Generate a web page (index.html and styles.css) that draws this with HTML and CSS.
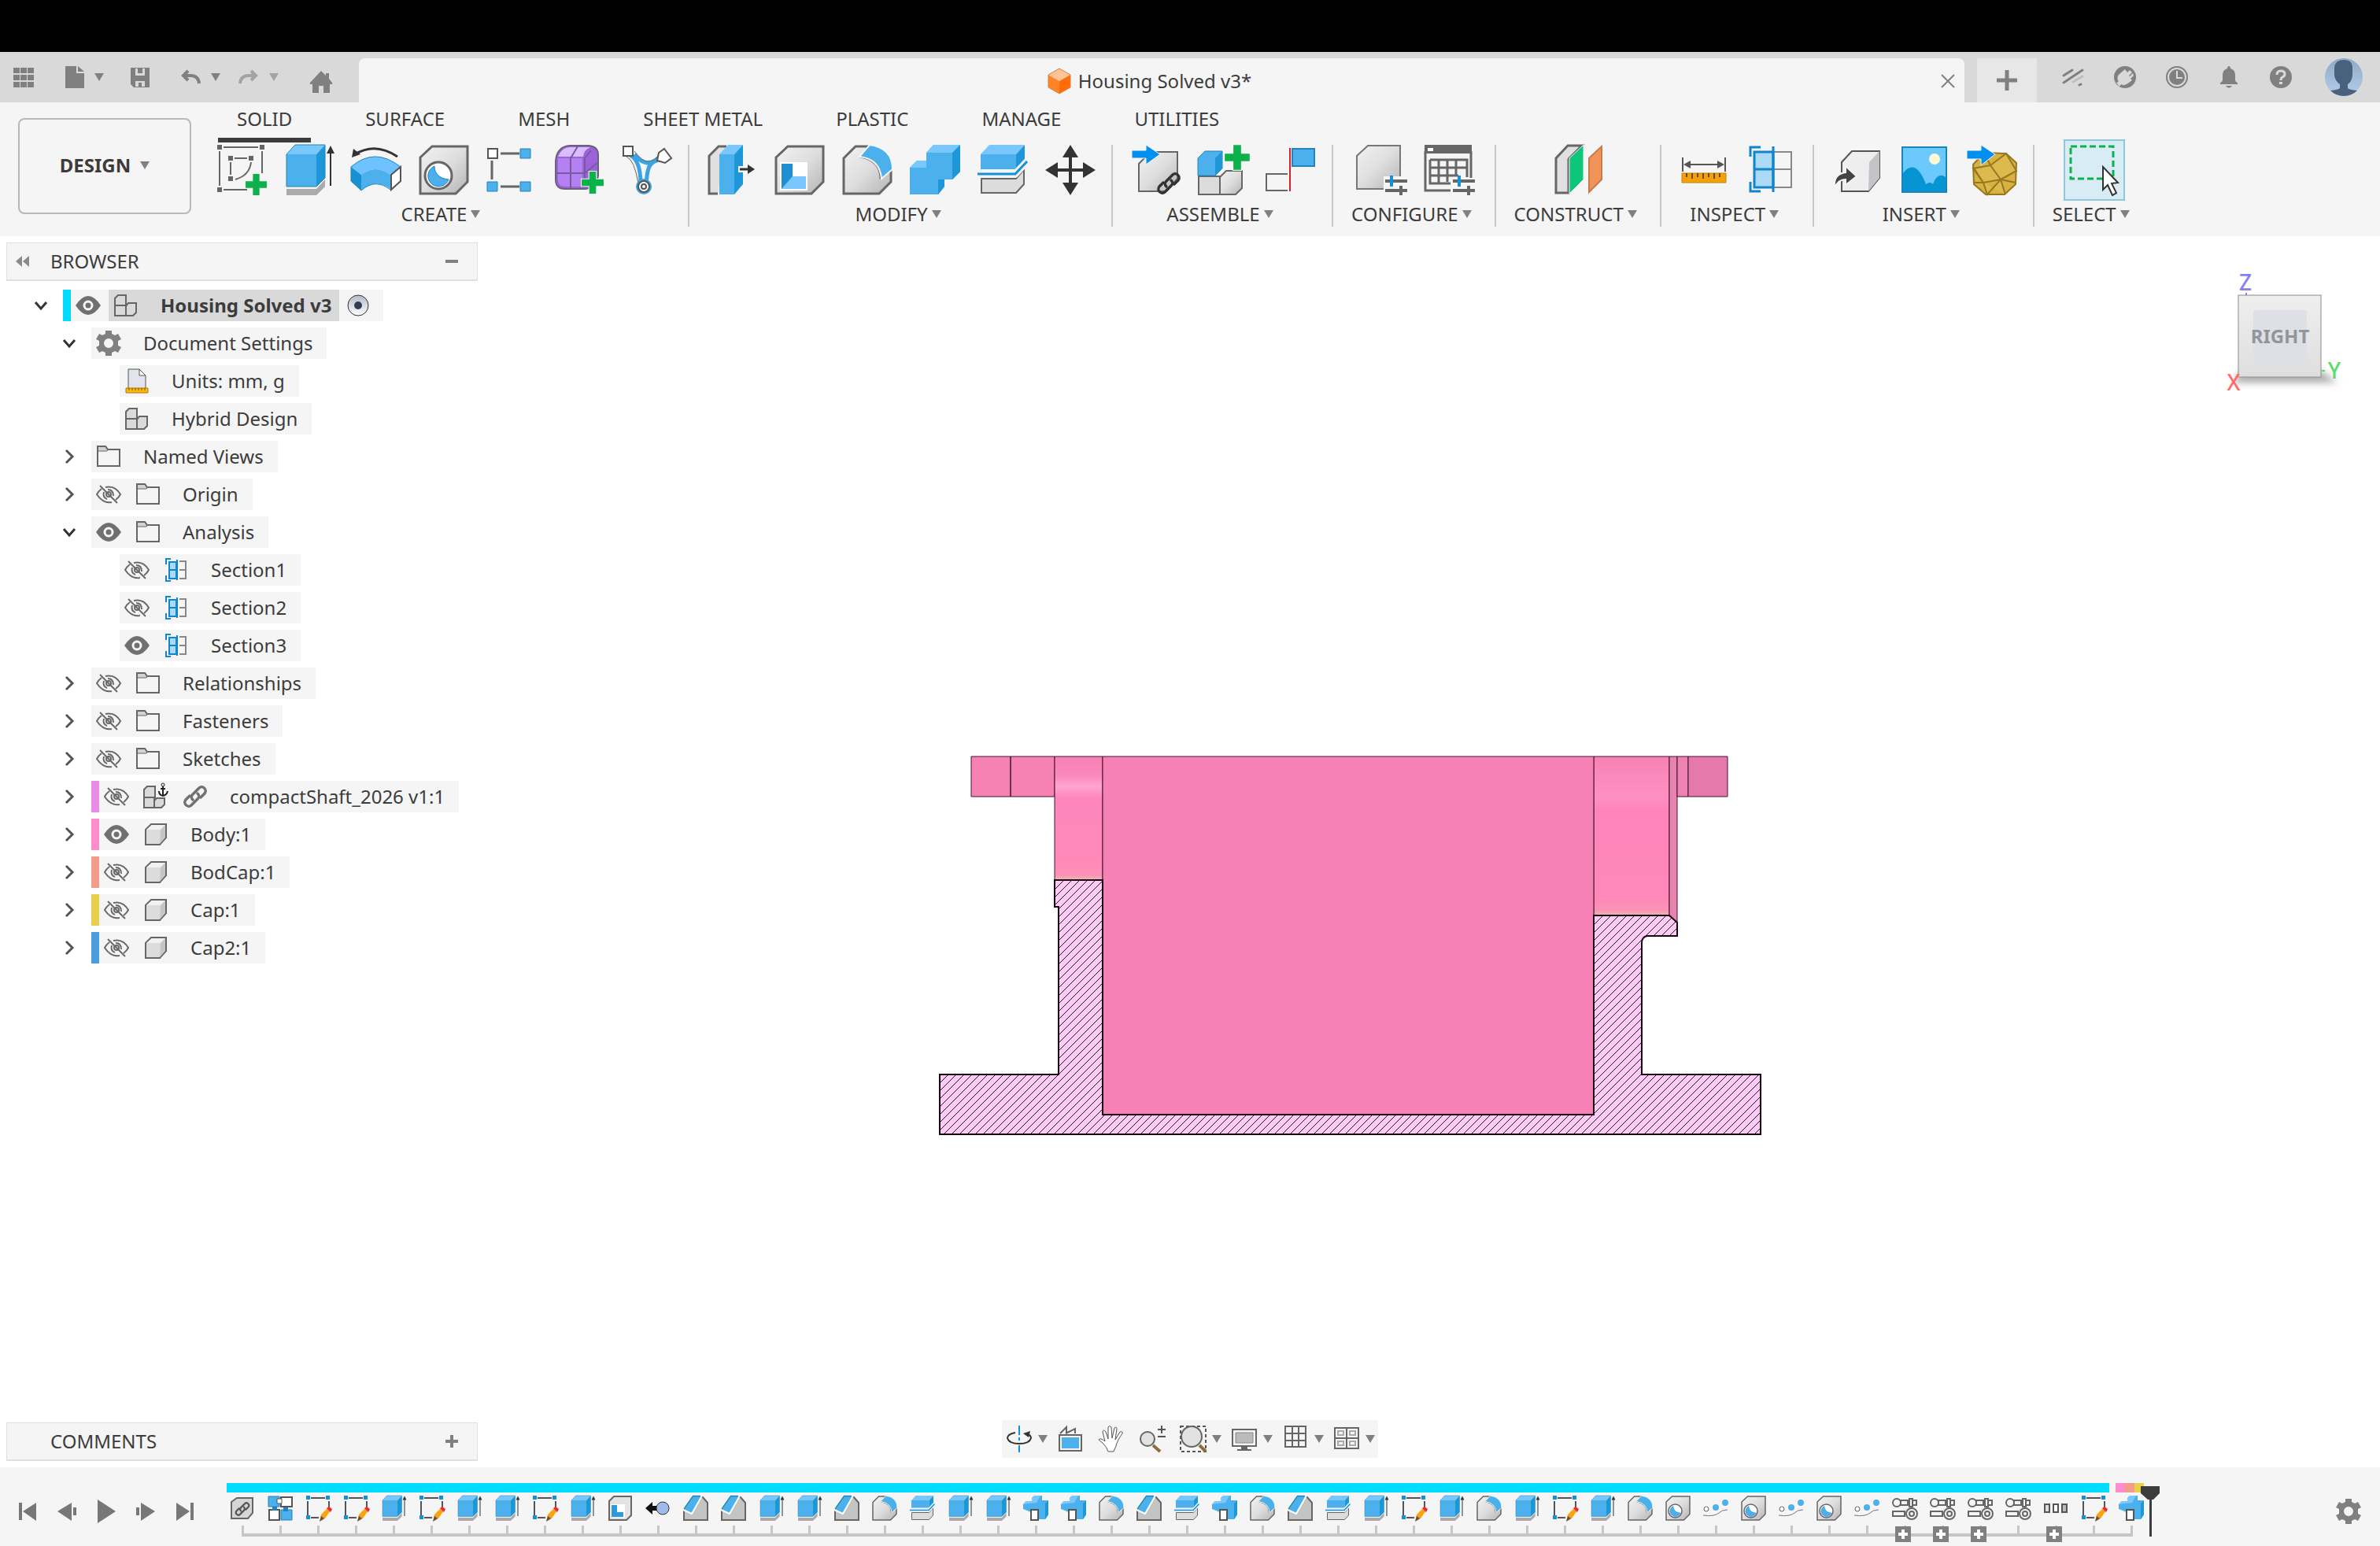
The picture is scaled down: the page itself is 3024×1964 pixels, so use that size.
FILE: index.html
```html
<!DOCTYPE html>
<html lang="en">
<head>
<meta charset="utf-8">
<title>Housing Solved v3*</title>
<link rel="stylesheet" href="styles.css">
</head>
<body>
<svg class="sprite" aria-hidden="true">
  <defs>
    <linearGradient id="g-grey" x1="0" y1="0" x2="1" y2="1"><stop offset="0" stop-color="#f2f2f2"/><stop offset=".5" stop-color="#dedede"/><stop offset="1" stop-color="#b4b4b4"/></linearGradient>
    <linearGradient id="g-radio" x1="0" y1="0" x2="0" y2="1"><stop offset="0" stop-color="#b4bac8"/><stop offset="1" stop-color="#fff"/></linearGradient>
    <linearGradient id="g-avatar" x1="0" y1="0" x2="0" y2="1"><stop offset="0" stop-color="#8fa9c6"/><stop offset="1" stop-color="#b4cdec"/></linearGradient>
  </defs>
  <symbol id="caret" viewBox="0 0 12 10"><path d="M0 0h12L6 10z" fill="currentColor"/></symbol>
  <symbol id="plus-green" viewBox="0 0 28 28"><path d="M9 0h10v9h9v10h-9v9H9v-9H0V9h9z" fill="#f5f5f5"/><path d="M10 1h8v9h9v8h-9v9h-8v-9H1v-8h9z" fill="#0cb14b"/></symbol>
  <symbol id="chain" viewBox="0 0 32 32"><g fill="none" stroke="currentColor" stroke-width="3.4" stroke-linecap="round"><path d="M13 20c-3-3-2-5 0-7l8-8c4-4 11 2 7 7l-5 5"/><path d="M19 12c3 3 2 5 0 7l-8 8c-4 4-11-2-7-7l5-5"/></g></symbol>

  <symbol id="i-sketch" viewBox="0 0 64 64"><g fill="none" stroke="#666" stroke-width="2"><path d="M10 3h44M5 8v44M59 8v28M10 57h30M24 17h16M19 22v16M45 22q-2 17-20 22"/></g><path d="M2 0h6v6H2zM56 0h6v6h-6zM2 54h6v6H2zM16 14h6v6h-6zM42 14h6v6h-6zM16 40h6v6h-6z" fill="#666"/><use href="#plus-green" x="37" y="36" width="29" height="29"/></symbol>
  <symbol id="i-extrude" viewBox="0 0 64 64"><path d="M4 56h38l11-12v9L42 64H4z" fill="#ababab"/><path d="M4 12 15 0h38L42 12z" fill="#7ac7fd"/><path d="M4 12h38v41H4z" fill="#4bb0eb"/><path d="M42 12 53 0v42L42 53z" fill="#1e97d8"/><path d="M4 53V12L15 0h38v42L42 53z" fill="none" stroke="#2184be" stroke-width="1"/><path d="M60 8v44" stroke="#333" stroke-width="2"/><path d="m60 1 5 10H55z" fill="#333"/></symbol>
  <symbol id="i-revolve" viewBox="0 0 64 64"><path d="M5 12Q31-4 59 15" fill="none" stroke="#333" stroke-width="3"/><path d="M1 16 3 5l9 7z" fill="#333"/><path d="M0 28Q30 2 63 28L50 38Q31 24 13 38z" fill="#6dc2ff"/><path d="m0 28 13 10v20L0 46z" fill="#1791d4"/><path d="M13 38Q31 24 50 38v18Q31 42 13 58z" fill="#4bb0eb"/><path d="M51 38 63 28v18L51 57z" fill="#fff" stroke="#555" stroke-width="2"/><path d="M0 46V28Q30 2 63 28M0 46l13 12Q31 42 50 57" fill="none" stroke="#2184be"/></symbol>
  <symbol id="i-hole" viewBox="0 0 64 64"><path d="M2 16 17 2h45v45L47 62H2z" fill="url(#g-grey)" stroke="#666" stroke-width="3"/><circle cx="25" cy="39" r="17" fill="#fff" stroke="#666" stroke-width="3"/><path d="M20 27a13.500 13.500 0 1 0 18 17C26 43 20 36 20 27z" fill="#4bb0eb" stroke="#2184be"/></symbol>
  <symbol id="i-pattern" viewBox="0 0 64 64"><path d="M18 11h24M18 53h24M7 20v24" stroke="#666" stroke-width="3"/><path d="M2 5h12v12H2z" fill="#fff" stroke="#555" stroke-width="2"/><path d="M43 5h13v12H43zM1 47h13v12H1zM43 47h13v12H43z" fill="#4bb0eb" stroke="#2184be"/></symbol>
  <symbol id="i-form" viewBox="0 0 64 64"><path d="M2 20Q4 2 20 1h24q12 1 12 12v26q-2 16-16 17H14Q2 56 2 44z" fill="#9c62dc" stroke="#6b6178" stroke-width="2"/><path d="M5 15Q10 3 20 3h26q-8 3-9 12z" fill="#d9bdff"/><path d="M5 17h31v36H14q-9 0-9-9z" fill="#b580f2"/><path d="M2 36h37l16-13M21 55V17L30 2M39 52V17l8-10" fill="none" stroke="#775c9c" stroke-width="2"/><use href="#plus-green" x="34" y="33" width="30" height="30"/></symbol>
  <symbol id="i-pipe" viewBox="0 0 64 64"><path d="M8 12q8 2 12 12 4 9 4 26M52 18q-15 2-18 12-2 6-3 20M16 12q8 10 16 11 10 0 20-12" fill="none" stroke="#3aa3e3" stroke-width="5"/><path d="M16 8q10 13 17 13 8 0 17-10M6 15q10 4 15 34" fill="none" stroke="#666" stroke-width="1"/><path d="M2 2h12v12H2z" fill="#fff" stroke="#555" stroke-width="2"/><path d="m54 5 9 12-8 6-10-3 2-10z" fill="#fff" stroke="#555" stroke-width="2"/><circle cx="28" cy="53" r="10" fill="#3aa3e3"/><circle cx="28" cy="53" r="7" fill="#fff" stroke="#555" stroke-width="2"/><circle cx="28" cy="53" r="3" fill="#fff" stroke="#555" stroke-width="2"/></symbol>

  <symbol id="i-presspull" viewBox="0 0 64 64"><path d="M14 62H3V14L15 2h10" fill="#e0e0e0" stroke="#666" stroke-width="3"/><path d="M16 12 27 0h19L35 12z" fill="#7ac7fd"/><path d="M16 12h19v51H16z" fill="#4bb0eb"/><path d="M35 12 46 0v50L35 63z" fill="#1e97d8"/><path d="M40 27h10v-8l14 12-14 12v-8H40z" fill="#f5f5f5"/><path d="M42 31h12" stroke="#333" stroke-width="3"/><path d="m52 25 9 6-9 6z" fill="#333"/></symbol>
  <symbol id="i-shell" viewBox="0 0 64 64"><path d="M2 16 17 2h45v45L47 62H2z" fill="url(#g-grey)" stroke="#666" stroke-width="3"/><path d="M7 22h35v36H7z" fill="#fff"/><path d="M9 24h14v32H9z" fill="#1e8fd0"/><path d="m9 56 14-16h17v16z" fill="#7ac7fd"/></symbol>
  <symbol id="i-fillet" viewBox="0 0 64 64"><path d="M2 17 17 2h17L24 15q24 5 25 26l13-10v16L47 62H2z" fill="url(#g-grey)" stroke="#666" stroke-width="3"/><path d="M22 15 35 0q29 4 29 31L50 43Q48 18 22 15z" fill="#4bb0eb" stroke="#f5f5f5" stroke-width="2"/></symbol>
  <symbol id="i-chamfer" viewBox="0 0 64 64"><path d="M2 62V36L24 2h24l14 16v44z" fill="#c4c4c4" stroke="#666" stroke-width="4"/><path d="M0 36 24 0h24L22 46z" fill="#4bb0eb" stroke="#fff" stroke-width="4"/><path d="M2 34 25 1h19" fill="none" stroke="#2184be" stroke-width="3"/></symbol>
  <symbol id="i-combine" viewBox="0 0 64 64"><path d="m0 29 9-9h12V10l9-10h34v34l-10 10H44v9L36 63H0z" fill="#4bb0eb"/><path d="m21 10 9-10h34L54 10zM0 29l9-9h12v9z" fill="#7ac7fd"/><path d="M54 10 64 0v34L54 44zM36 44h8v9l-8 10z" fill="#1e97d8"/></symbol>
  <symbol id="i-split" viewBox="0 0 64 64"><path d="M4 12 15 0h45L49 12z" fill="#7ac7fd"/><path d="M4 12h45v19H4z" fill="#4bb0eb"/><path d="M49 12 60 0v19L49 31z" fill="#1e97d8"/><path d="M5 43h44l10-12v19L49 61H5z" fill="#dcdcdc" stroke="#666" stroke-width="2"/><path d="M0 37h48l15-16" fill="none" stroke="#f5f5f5" stroke-width="9"/><path d="M0 37h48l15-16" fill="none" stroke="#1290dc" stroke-width="3"/></symbol>
  <symbol id="i-move" viewBox="0 0 64 64"><path d="m32 0 10 16h-8v14h14v-8l16 10-16 10v-8H34v14h8L32 64 22 48h8V34H16v8L0 32l16-10v8h14V16h-8z" fill="#333"/></symbol>

  <symbol id="i-insertlink" viewBox="0 0 64 64"><path d="M11 24 26 9h34v34L46 59H11z" fill="url(#g-grey)" stroke="#666" stroke-width="2"/><path d="M2 7h18V0l18 12-18 13v-8H2z" fill="#0090f0" stroke="#f5f5f5"/><use href="#chain" x="33" y="33" width="32" height="32" class="ink"/></symbol>
  <symbol id="i-newcomp" viewBox="0 0 64 64"><path d="M1 40h27v23H1z" fill="#dcdcdc" stroke="#666" stroke-width="2"/><path d="m28 41 8-8h20v22l-8 8H28z" fill="url(#g-grey)" stroke="#666" stroke-width="2"/><path d="m0 17 9-9h22v22l-9 9H0z" fill="#4bb0eb" stroke="#2184be"/><path d="m22 17 9-9v22l-9 9z" fill="#1e97d8"/><use href="#plus-green" x="33" y="-1" width="34" height="34"/></symbol>
  <symbol id="i-joint" viewBox="0 0 64 64"><path d="M28 37H1v21h27" fill="none" stroke="#666" stroke-width="2"/><path d="M34 5h28v22H34z" fill="#4bb0eb" stroke="#2184be" stroke-width="2"/><path d="M31 4v55" stroke="#d8202a" stroke-width="2"/></symbol>

  <symbol id="i-config" viewBox="0 0 64 64"><path d="M2 14 16 1h41v42L46 56H2z" fill="url(#g-grey)" stroke="#777" stroke-width="2"/><path d="M36 40h30v26H36z" fill="#f5f5f5"/><path d="M38 46h28M38 58h28" stroke="#666" stroke-width="4"/><path d="M46 39v14" stroke="#1290dc" stroke-width="4"/><path d="M58 52v12" stroke="#666" stroke-width="4"/></symbol>
  <symbol id="i-table" viewBox="0 0 64 64"><path d="M2 0h60v11H2z" fill="#666"/><path d="M6 4h7v4H6z" fill="#fff"/><path d="M3 8v50h32M61 8v34M9 19h47v22M9 19v30h26M9 29h46M9 39h36M20 19v30M31 19v28M42 19v20" fill="none" stroke="#666" stroke-width="3"/><path d="M38 46h28M38 58h28" stroke="#666" stroke-width="4"/><path d="M46 39v14" stroke="#1290dc" stroke-width="4"/><path d="M58 52v12" stroke="#666" stroke-width="4"/></symbol>
  <symbol id="i-plane" viewBox="0 0 64 64"><path d="M3 61V17L18 1h18L19 18v43z" fill="#e0e0e0" stroke="#666" stroke-width="3"/><path d="M20 17 38 0v44L20 62z" fill="#0cc67a" stroke="#f5f5f5"/><path d="M45 17 61 2v42L45 60z" fill="#f0945a" stroke="#c97b49" stroke-width="2"/></symbol>
  <symbol id="i-measure" viewBox="0 0 64 64"><path d="M5 16v18M59 16v18M9 25h46" stroke="#555" stroke-width="2"/><path d="m6 25 9-5v10zM58 25l-9-5v10z" fill="#555"/><path d="M4 36h56v12H4z" fill="#f2a10c" stroke="#c98200"/><path d="M10 36v5M17 36v7M24 36v5M31 36v7M38 36v5M45 36v7M52 36v5" stroke="#6b4a00" stroke-width="2"/></symbol>
  <symbol id="i-section" viewBox="0 0 64 64"><path d="M10 9h24v45H10z" fill="#acd9f5" stroke="#0f86cc" stroke-width="3"/><path d="M34 9h23v45H34M34 31h23" fill="none" stroke="#888" stroke-width="2"/><path d="M10 31h24M34 2v58M18 3H5v12M18 59H5V47" fill="none" stroke="#0f86cc" stroke-width="3"/></symbol>
  <symbol id="i-derive" viewBox="0 0 64 64"><path d="M13 22 26 8h35v34L47 59H13z" fill="#eee" stroke="#555" stroke-width="2"/><path d="m48 22 13-14v34L47 59z" fill="#c3c3c8"/><path d="M4 55q-2-18 14-20v-8l14 13-14 11v-7Q8 44 4 55z" fill="#444" stroke="#f5f5f5" stroke-width="2"/></symbol>
  <symbol id="i-image" viewBox="0 0 64 64"><path d="M4 3h56v57H4z" fill="#6bc9fd" stroke="#1a84b8" stroke-width="2"/><circle cx="45" cy="18" r="7" fill="#fdf9d2"/><path d="M5 36q16-20 29 14 6-4 9 0 6-16 16-9v18H5z" fill="#0694d3"/></symbol>
  <symbol id="i-mesh" viewBox="0 0 64 64"><path d="m22 10 28 1 13 12-1 27-14 13H24L9 50 8 25z" fill="#d7b240" stroke="#96781f" stroke-width="2"/><path d="m8 30 22-4 13 18-22 4zM30 26l20-15 13 22-20 11M21 48l5 15 17-19 6 19M9 48l12 0M43 44l19 4M30 26 22 10M21 48 8 28" fill="#e3c25c" fill-opacity=".5" stroke="#96781f" stroke-width="2"/><path d="M0 7h18V0l18 12-18 14v-8H0z" fill="#0090f0" stroke="#f5f5f5"/></symbol>
  <symbol id="i-select" viewBox="0 0 64 64"><path d="M2 2h54v41H2z" fill="none" stroke="#0cb14b" stroke-width="3" stroke-dasharray="8 4"/><path d="M43 28v29l6-6 6 13 5-3-6-12 8-1z" fill="#fff" stroke="#333" stroke-width="2"/></symbol>

  <symbol id="t-apps" viewBox="0 0 28 28"><path d="M1 2h8v7H1zm9 0h8v7h-8zm9 0h8v7h-8zM1 11h8v7H1zm9 0h8v7h-8zm9 0h8v7h-8zM1 20h8v7H1zm9 0h8v7h-8zm9 0h8v7h-8z" fill="currentColor"/></symbol>
  <symbol id="t-file" viewBox="0 0 28 28"><path d="M3 0h14v9h10v19H3zM19 0l8 7h-8z" fill="currentColor"/></symbol>
  <symbol id="t-save" viewBox="0 0 28 28"><path d="M2 2h24v25H6l-4-4zM8 3v9h12V3zM8 19v7h12v-7z" fill="currentColor" fill-rule="evenodd"/><path d="M11 2h6v7h-6zM12 21h4v5h-4z" fill="currentColor"/></symbol>
  <symbol id="t-undo" viewBox="0 0 28 28"><path d="M11 6 5 12l6 6M6 12h8q10 0 11 10" fill="none" stroke="currentColor" stroke-width="4"/></symbol>
  <symbol id="t-redo" viewBox="0 0 28 28"><path d="m17 6 6 6-6 6M22 12h-8Q4 12 3 22" fill="none" stroke="currentColor" stroke-width="4"/></symbol>
  <symbol id="t-home" viewBox="0 0 28 28"><path d="M14 0 20 6V3h4v7l4 5v2h-3v11h-8v-9h-6v9H3V17H0v-2z" fill="currentColor"/></symbol>
  <symbol id="t-ext" viewBox="0 0 28 28"><g stroke="currentColor" stroke-width="3" stroke-linecap="round"><path d="M2 12 13 5M2 21 26 5"/><path d="m14 20 12-7" opacity=".3"/><path d="m22 24 2-1"/></g></symbol>
  <symbol id="t-plug" viewBox="0 0 28 28"><circle cx="14" cy="14" r="14" fill="currentColor"/><path d="m14 4 3 4 3-3 3 3-4 4 1 1 4-4 1 3-4 4 2 2-4 3q-6 5-10 2l-2 3-4-5 3-1Q2 14 8 9z" fill="#d9d9d9"/></symbol>
  <symbol id="t-clock" viewBox="0 0 28 28"><circle cx="14" cy="14" r="13" fill="none" stroke="currentColor" stroke-width="2"/><circle cx="14" cy="14" r="10" fill="currentColor"/><path d="M14 6v9h7" fill="none" stroke="#d9d9d9" stroke-width="2"/></symbol>
  <symbol id="t-bell" viewBox="0 0 28 28"><path d="M14 0q2 0 2 3 6 2 6 8v6q0 3 3 4v2H3v-2q3-1 3-4v-6q0-6 6-8 0-3 2-3zM10 25h8q-4 5-8 0z" fill="currentColor"/></symbol>
  <symbol id="t-help" viewBox="0 0 28 28"><circle cx="14" cy="14" r="14" fill="currentColor"/><path d="M9 11q0-5 5-5t5 4q0 3-3 4-2 1-2 4" fill="none" stroke="#d9d9d9" stroke-width="3"/><path d="M12 20h4v3h-4z" fill="#d9d9d9"/></symbol>
  <symbol id="t-avatar" viewBox="0 0 48 48"><circle cx="24" cy="24" r="24" fill="url(#g-avatar)"/><path d="M12 12Q13 2 24 2t11 10v10q-1 8-6 11v5q2 2 12 3-7 7-17 7T7 41q10-1 12-3v-5q-6-4-7-11z" fill="#4a617e"/></symbol>
  <symbol id="t-cube" viewBox="0 0 28 32"><path d="M14 0 28 8 14 16 0 8z" fill="#ffc396"/><path d="m0 8 14 8v16L0 24z" fill="#ff8327"/><path d="m28 8-14 8v16l14-8z" fill="#ff6a0a"/><path d="m0 8 14-8 14 8v16l-14 8-14-8z" fill="none" stroke="#d9803f"/></symbol>

  <symbol id="b-down" viewBox="0 0 16 16"><path d="m1 4 7 8 7-8" fill="none" stroke="#333" stroke-width="3"/></symbol>
  <symbol id="b-right" viewBox="0 0 16 16"><path d="m4 0 8 8-8 8" fill="none" stroke="#555" stroke-width="3"/></symbol>
  <symbol id="b-eye" viewBox="0 0 32 32"><path d="M0 16Q16-8 32 16 16 40 0 16z" fill="#707070"/><circle cx="16" cy="16" r="5" fill="#707070" stroke="#f5f5f5" stroke-width="3"/></symbol>
  <symbol id="b-eyeoff" viewBox="0 0 32 32"><g fill="none" stroke="#6a6a6a" stroke-width="2"><path d="M7 9Q3 12 1 16q8 12 19 10M12 7q12-3 19 9-2 4-6 7"/><path d="M10 13q-2 7 4 9M15 10q7 0 7 8M5 5l22 22"/><circle cx="16" cy="16" r="3"/></g></symbol>
  <symbol id="b-comp" viewBox="0 0 32 32"><g fill="#dadada" stroke="#666" stroke-width="2"><path d="M2 16V7l4-4h10v13zM2 16h14v13H2z"/><path d="M16 29V17l3-4h10v12l-4 4z"/></g></symbol>
  <symbol id="b-anchorcomp" viewBox="0 0 32 32"><g fill="#dadada" stroke="#666" stroke-width="2"><path d="M1 17V7l4-4h10v14zM1 17h13v13H1z"/><path d="M14 30V21l3-3h10v8l-4 4z"/></g><path d="M25 3v12M22 6h6M20 9q0 5 5 6 5-1 6-6" fill="none" stroke="#222" stroke-width="2"/><circle cx="25" cy="1" r="2" fill="none" stroke="#222"/></symbol>
  <symbol id="b-body" viewBox="0 0 32 32"><path d="M3 10 10 3h19v17l-8 9H3z" fill="#dcdcdc" stroke="#666" stroke-width="2"/><path d="m4 10 7-6h17l-6 6z" fill="#f2f2f2"/><path d="m22 10 6-6v16l-7 8z" fill="#c6c6c6"/></symbol>
  <symbol id="b-folder" viewBox="0 0 32 32"><path d="M2 3h12v6H2z" fill="#d2d2d2"/><path d="M2 28V3h10l3 4h15v21z" fill="none" stroke="#666" stroke-width="2"/><path d="M2 9h12l2-2" fill="none" stroke="#666"/></symbol>
  <symbol id="b-section" viewBox="0 0 32 32"><path d="M7 6h9v21H7z" fill="#acd9f5" stroke="#0f86cc" stroke-width="2"/><path d="M20 5h8v22h-8M20 16h8" fill="none" stroke="#888" stroke-width="2"/><path d="M7 16h9M17 3v26M9 2H3v7M9 30H3v-7" fill="none" stroke="#0f86cc" stroke-width="2"/></symbol>
  <symbol id="b-gear" viewBox="0 0 32 32"><path d="M12 0h8v4l4 2 4-2 4 7-4 2v6l4 2-4 7-4-2-4 2v4h-8v-4l-4-2-4 2-4-7 4-2v-6L0 11l4-7 4 2 4-2zM16 10a6 6 0 1 0 0 12 6 6 0 0 0 0-12z" fill="#808080" fill-rule="evenodd"/></symbol>
  <symbol id="b-units" viewBox="0 0 32 32"><path d="M5 1h14l8 8v18H5z" fill="#e2e4ec" stroke="#555"/><path d="M19 1v8h8z" fill="#fff" stroke="#555"/><path d="M2 25h28v6H2z" fill="#fbb90e" stroke="#b07800"/><path d="M6 25v3M10 25v3M14 25v3M18 25v3M22 25v3M26 25v3" stroke="#7a5200"/></symbol>
  <symbol id="b-radio" viewBox="0 0 28 28"><circle cx="14" cy="14" r="13" fill="url(#g-radio)" stroke="#333" stroke-width="1"/><circle cx="14" cy="14" r="5" fill="#333d50"/></symbol>

  <symbol id="n-orbit" viewBox="0 0 34 34"><path d="M17 0v12M17 15v4M17 25v9" stroke="#1290dc" stroke-width="2"/><path d="M12 9Q2 11 2 16q2 7 15 7t15-7q0-4-6-6" fill="none" stroke="#333" stroke-width="2"/><path d="m22 10 9-3-2 8z" fill="#333"/></symbol>
  <symbol id="n-look" viewBox="0 0 34 34"><path d="M3 12h28v20H3z" fill="#f5f5f5" stroke="#666" stroke-width="2"/><path d="M6 15h22v14H6z" fill="#4bb0eb"/><path d="m4 10 8-8v8M11 10l12-6v6" fill="none" stroke="#666" stroke-width="2"/></symbol>
  <symbol id="n-pan" viewBox="0 0 34 34"><path d="M13 33q-1-5-7-11L1 18q2-3 8 2L6 8q1-4 4 0l3 9V2q2-3 4 0l1 14 3-13q3-2 3 1l-2 14 6-10q4-1 3 2-7 10-8 16l-3 7z" fill="#fff" stroke="#555"/></symbol>
  <symbol id="n-zoom" viewBox="0 0 34 34"><circle cx="11" cy="17" r="9" fill="#e2e2e2" stroke="#666" stroke-width="2"/><path d="m18 25 9 8" stroke="#8d6c3f" stroke-width="4"/><path d="M24 5h10M29 0v10M24 14h10" stroke="#555" stroke-width="2"/></symbol>
  <symbol id="n-fit" viewBox="0 0 34 34"><path d="M1 1h32v32H1z" fill="none" stroke="#555" stroke-width="2" stroke-dasharray="4 3"/><circle cx="15" cy="14" r="13" fill="#e2e2e2" stroke="#666" stroke-width="2"/><path d="m25 25 8 8" stroke="#8d6c3f" stroke-width="4"/></symbol>
  <symbol id="n-display" viewBox="0 0 34 34"><path d="M2 5h30v21H2z" fill="#f5f5f5" stroke="#666" stroke-width="2"/><path d="M6 9h22v13H6z" fill="#bbb" stroke="#888"/><path d="M13 26h8v4h5v2H8v-2h5z" fill="#666"/></symbol>
  <symbol id="n-grid" viewBox="0 0 34 34"><path d="M4 1h26v26H4zM13 1v26M21 1v26M4 10h26M4 19h26" fill="#f5f5f5" stroke="#666" stroke-width="2"/></symbol>
  <symbol id="n-views" viewBox="0 0 34 34"><path d="M2 3h30v26H2zM17 3v26M2 16h30" fill="#f5f5f5" stroke="#666" stroke-width="2"/><path d="M6 7h7v5H6zM21 7h7v5h-7zM6 20h7v5H6zM21 20h7v5h-7z" fill="none" stroke="#aaa" stroke-width="2"/></symbol>

  <symbol id="p-first" viewBox="0 0 26 30"><path d="M2 4h4v22H2zM24 4v23L7 15z" fill="#777"/></symbol>
  <symbol id="p-prev" viewBox="0 0 26 30"><path d="M19 4v23L1 15zM21 10h4v10h-4z" fill="#777"/></symbol>
  <symbol id="p-play" viewBox="0 0 26 30"><path d="M2 0v30l23-15z" fill="#777"/></symbol>
  <symbol id="p-next" viewBox="0 0 26 30"><path d="M7 4v23l18-12zM1 10h4v10H1z" fill="#777"/></symbol>
  <symbol id="p-last" viewBox="0 0 26 30"><path d="M24 4h-4v22h4zM2 4v23l17-12z" fill="#777"/></symbol>

  <symbol id="s-link" viewBox="0 0 32 32"><path d="m2 8 7-5h20v19l-6 7H2z" fill="#d6d6d6" stroke="#666" stroke-width="2"/><use href="#chain" x="6" y="7" width="20" height="20" color="#555"/></symbol>
  <symbol id="s-joint" viewBox="0 0 32 32"><path d="M1 1h14v13H1zM17 18h14v13H17z" fill="#4bb0eb" stroke="#2184be"/><path d="M17 2h14v12H17zM2 18h13v13H2z" fill="#fff" stroke="#555" stroke-width="2"/><path d="M12 4h6v6h-6z" fill="#fff" stroke="#555"/><path d="M6 14h6v5H6zM20 15h6v5h-6z" fill="#2184be"/></symbol>
  <symbol id="s-sketch" viewBox="0 0 32 32"><path d="M7 3h18M3 7v18M30 7v10M7 28h10" stroke="#555" stroke-width="2"/><path d="M1 0h5v5H1zM26 0h5v5h-5zM1 25h5v5H1z" fill="#1290dc"/><path d="m20 24 8-8 4 3-7 10-7 4z" fill="#fba40d"/><path d="m27 16 3-2 4 3-2 4z" fill="#f0243c"/><path d="m20 26 4 3-6 4z" fill="#555"/></symbol>
  <symbol id="s-shell" viewBox="0 0 32 32"><path d="m2 7 6-6h22v24l-6 6H2z" fill="#e3e3e3" stroke="#666" stroke-width="2"/><path d="M4 11h18v17H4z" fill="#fff"/><path d="M5 12h7v9h8v6H5z" fill="#2b9bdc"/></symbol>
  <symbol id="s-move" viewBox="0 0 32 32"><path d="m0 16 9-8v5h7v6H9v5z" fill="#111"/><circle cx="22" cy="16" r="8" fill="#9dbce8" stroke="#333"/></symbol>
  <symbol id="s-combine" viewBox="0 0 32 32"><path d="m0 11 4-4h7V3l3-3h10v6h8v18l-4 6H10v-9l-10-4z" fill="#4bb0eb"/><path d="m0 11 4-4h7V3l3-3h8l-5 9z" fill="#7ac7fd"/><path d="m28 10 4-4v18l-4 6z" fill="#1e97d8"/><path d="M10 18h9v13h-9z" fill="#fff" stroke="#555" stroke-width="2"/></symbol>
  <symbol id="s-path" viewBox="0 0 32 32"><circle cx="4" cy="17" r="3" fill="#fff" stroke="#666"/><circle cx="16" cy="15" r="4" fill="#4bb0eb"/><circle cx="28" cy="9" r="4" fill="#4bb0eb"/><path d="M0 25q14 2 20-3 4-4 11-4" fill="none" stroke="#777"/></symbol>
  <symbol id="s-fastener" viewBox="0 0 32 32"><g fill="#f5f5f5" stroke="#666" stroke-width="2"><circle cx="6" cy="9" r="5"/><path d="M11 6h9v6h-9zM22 4h4v10h-4zM26 6h5v6h-5zM1 20h15v6H1z"/><circle cx="25" cy="23" r="7"/><circle cx="25" cy="23" r="3"/></g></symbol>
  <symbol id="s-pattern" viewBox="0 0 32 32"><g stroke="#555" stroke-width="2"><path d="M2 11h6v10H2z" fill="#ddd"/><path d="M13 11h6v10h-6z" fill="#fff"/><path d="M24 11h6v10h-6z" fill="#bbb"/></g></symbol>
</svg>

<div class="app">
<div class="menubar-gap"></div>

<header class="titlebar">
  <div class="quick">
    <button aria-label="Data panel"><svg class="ic28"><use href="#t-apps"/></svg></button>
    <button aria-label="File"><svg class="ic28"><use href="#t-file"/></svg><svg class="caret"><use href="#caret"/></svg></button>
    <button aria-label="Save"><svg class="ic28"><use href="#t-save"/></svg></button>
    <button aria-label="Undo"><svg class="ic28"><use href="#t-undo"/></svg><svg class="caret"><use href="#caret"/></svg></button>
    <button class="faded" aria-label="Redo"><svg class="ic28"><use href="#t-redo"/></svg><svg class="caret"><use href="#caret"/></svg></button>
    <button class="home" aria-label="Home"><svg class="ic28"><use href="#t-home"/></svg></button>
  </div>
  <div class="doc-tab">
    <div class="doc-name"><svg class="cube"><use href="#t-cube"/></svg><span>Housing Solved v3*</span></div>
    <button aria-label="Close"><svg class="close" viewBox="0 0 18 18"><path d="m1 1 16 16M17 1 1 17" stroke="currentColor" stroke-width="2"/></svg></button>
  </div>
  <button class="new-tab" aria-label="New design"><svg class="ic28" viewBox="0 0 28 28"><path d="M14 1v26M1 14h26" stroke="currentColor" stroke-width="5"/></svg></button>
  <div class="account">
    <button aria-label="Extensions"><svg class="ic28"><use href="#t-ext"/></svg></button>
    <button aria-label="Add-ins"><svg class="ic28"><use href="#t-plug"/></svg></button>
    <button aria-label="Job status"><svg class="ic28"><use href="#t-clock"/></svg></button>
    <button aria-label="Notifications"><svg class="ic28"><use href="#t-bell"/></svg></button>
    <button aria-label="Help"><svg class="ic28"><use href="#t-help"/></svg></button>
    <button class="profile" aria-label="Profile"><svg class="avatar"><use href="#t-avatar"/></svg></button>
  </div>
</header>

<section class="toolbar">
  <button class="workspace">DESIGN<svg class="caret"><use href="#caret"/></svg></button>
  <div class="ribbon">
    <nav class="tabs">
      <button class="current">SOLID</button><button>SURFACE</button><button>MESH</button><button>SHEET METAL</button><button>PLASTIC</button><button>MANAGE</button><button>UTILITIES</button>
    </nav>
    <div class="groups">
      <div class="group"><div class="tools">
        <button aria-label="Create sketch"><svg class="ic64"><use href="#i-sketch"/></svg></button>
        <button aria-label="Extrude"><svg class="ic64"><use href="#i-extrude"/></svg></button>
        <button aria-label="Revolve"><svg class="ic64"><use href="#i-revolve"/></svg></button>
        <button aria-label="Hole"><svg class="ic64"><use href="#i-hole"/></svg></button>
        <button aria-label="Rectangular pattern"><svg class="ic64"><use href="#i-pattern"/></svg></button>
        <button aria-label="Create form"><svg class="ic64"><use href="#i-form"/></svg></button>
        <button aria-label="Automated modeling"><svg class="ic64"><use href="#i-pipe"/></svg></button>
      </div><button class="label">CREATE<svg class="caret"><use href="#caret"/></svg></button></div>
      <div class="group"><div class="tools">
        <button aria-label="Press pull"><svg class="ic64"><use href="#i-presspull"/></svg></button>
        <button aria-label="Shell"><svg class="ic64"><use href="#i-shell"/></svg></button>
        <button aria-label="Fillet"><svg class="ic64"><use href="#i-fillet"/></svg></button>
        <button aria-label="Combine"><svg class="ic64"><use href="#i-combine"/></svg></button>
        <button aria-label="Split body"><svg class="ic64"><use href="#i-split"/></svg></button>
        <button aria-label="Move"><svg class="ic64"><use href="#i-move"/></svg></button>
      </div><button class="label">MODIFY<svg class="caret"><use href="#caret"/></svg></button></div>
      <div class="group"><div class="tools">
        <button aria-label="Insert component"><svg class="ic64"><use href="#i-insertlink"/></svg></button>
        <button aria-label="New component"><svg class="ic64"><use href="#i-newcomp"/></svg></button>
        <button aria-label="Joint"><svg class="ic64"><use href="#i-joint"/></svg></button>
      </div><button class="label">ASSEMBLE<svg class="caret"><use href="#caret"/></svg></button></div>
      <div class="group"><div class="tools">
        <button aria-label="Configure"><svg class="ic64"><use href="#i-config"/></svg></button>
        <button aria-label="Configuration table"><svg class="ic64"><use href="#i-table"/></svg></button>
      </div><button class="label">CONFIGURE<svg class="caret"><use href="#caret"/></svg></button></div>
      <div class="group"><div class="tools">
        <button aria-label="Offset plane"><svg class="ic64"><use href="#i-plane"/></svg></button>
      </div><button class="label">CONSTRUCT<svg class="caret"><use href="#caret"/></svg></button></div>
      <div class="group"><div class="tools">
        <button aria-label="Measure"><svg class="ic64"><use href="#i-measure"/></svg></button>
        <button aria-label="Section analysis"><svg class="ic64"><use href="#i-section"/></svg></button>
      </div><button class="label">INSPECT<svg class="caret"><use href="#caret"/></svg></button></div>
      <div class="group"><div class="tools">
        <button aria-label="Derive"><svg class="ic64"><use href="#i-derive"/></svg></button>
        <button aria-label="Canvas"><svg class="ic64"><use href="#i-image"/></svg></button>
        <button aria-label="Insert mesh"><svg class="ic64"><use href="#i-mesh"/></svg></button>
      </div><button class="label">INSERT<svg class="caret"><use href="#caret"/></svg></button></div>
      <div class="group"><div class="tools">
        <button class="active" aria-label="Select"><svg class="ic64"><use href="#i-select"/></svg></button>
      </div><button class="label">SELECT<svg class="caret"><use href="#caret"/></svg></button></div>
    </div>
  </div>
</section>

<main class="canvas">
  <svg class="model" viewBox="1190 956 1052 490" role="img" aria-label="Section view of the housing">
    <defs>
      <pattern id="hatch" width="10" height="10" patternUnits="userSpaceOnUse"><rect width="10" height="10" fill="#fbcdf4"/><path d="M-1 11 11-1" stroke="#2c0f29" stroke-width="1"/></pattern>
      <linearGradient id="m-left" x1="0" y1="0" x2="0" y2="1"><stop offset="0" stop-color="#f682b5"/><stop offset=".15" stop-color="#fb88bb"/><stop offset=".24" stop-color="#ffa4d0"/><stop offset=".34" stop-color="#ff86bb"/><stop offset=".85" stop-color="#ff88b9"/><stop offset=".96" stop-color="#fb92b6"/><stop offset="1" stop-color="#e8b9b4"/></linearGradient>
      <linearGradient id="m-right" x1="0" y1="0" x2="0" y2="1"><stop offset="0" stop-color="#f682b3"/><stop offset=".25" stop-color="#ff90c3"/><stop offset=".34" stop-color="#ff84ba"/><stop offset=".9" stop-color="#ff88b9"/><stop offset=".97" stop-color="#f995b5"/><stop offset="1" stop-color="#e8b9b4"/></linearGradient>
    </defs>
    <g stroke="#45142c" stroke-width="1">
      <path d="M1234 961h50v51h-50zM1284 961h56v51h-56z" fill="#f682b4"/>
      <path d="M1340 961h61v157h-61z" fill="url(#m-left)"/>
      <path d="M2025 961h96v202h-96z" fill="url(#m-right)"/>
      <path d="M2121 961h10v211l-10-9z" fill="#e882ae"/>
      <path d="M2131 961h14v51h-14z" fill="#ee82b2"/>
      <path d="M2145 961h50v51h-50z" fill="#e679ab"/>
      <path d="M1401 961h624v455h-624z" fill="#f682b5"/>
    </g>
    <path d="M1340 1118h61v298h624v-253h96l10 9v17h-38q-7 1-7 9v167h151v76H1194v-76h151v-213h-5z" fill="url(#hatch)" stroke="#1a0013" stroke-width="2"/>
  </svg>

  <svg class="viewcube" viewBox="0 0 160 170" role="img" aria-label="View cube: right">
    <defs>
      <filter id="soft" x="-20%" y="-100%" width="140%" height="300%"><feGaussianBlur stdDeviation="5"/></filter>
      <linearGradient id="face" x1="0" y1="0" x2="0" y2="1"><stop offset="0" stop-color="#efefef"/><stop offset="1" stop-color="#dedede"/></linearGradient>
    </defs>
    <path d="M18 146h132l-20-14H26z" fill="#aaa" filter="url(#soft)"/>
    <rect x="24" y="35" width="105" height="104" fill="url(#face)" stroke="#8c8c8c"/>
    <rect x="43" y="54" width="68" height="68" rx="3" fill="#dde0e4"/>
    <text x="77" y="96" class="cube-face">RIGHT</text>
    <path d="M34 32v3" stroke="#8a7ff0" stroke-width="2"/><path d="M130 131h4" stroke="#59dd68" stroke-width="2"/>
    <text x="33" y="29" class="axis axis-z">Z</text>
    <text x="18" y="156" class="axis axis-x">X</text>
    <text x="146" y="141" class="axis axis-y">Y</text>
  </svg>

  <aside class="side">
    <div class="browser">
      <div class="panel-head">
        <button aria-label="Collapse"><svg class="rewind" viewBox="0 0 18 14"><path d="M8 0v14L0 7zM17 0v14L9 7z" fill="#8a8a8a"/></svg></button>
        <h2>BROWSER</h2>
        <button aria-label="Minimize"><svg class="sign" viewBox="0 0 18 18"><path d="M1 9h16" stroke="#808080" stroke-width="4"/></svg></button>
      </div>
      <ul class="tree">
        <li class="lv0"><button aria-label="Collapse"><svg class="chev"><use href="#b-down"/></svg></button><div class="node tag cyan"><svg class="ic32"><use href="#b-eye"/></svg><div class="picked"><svg class="ic32"><use href="#b-comp"/></svg><span>Housing Solved v3</span></div><svg class="ic28"><use href="#b-radio"/></svg></div></li>
        <li class="lv1"><button aria-label="Collapse"><svg class="chev"><use href="#b-down"/></svg></button><div class="node"><svg class="ic32"><use href="#b-gear"/></svg><span>Document Settings</span></div></li>
        <li class="lv2"><div class="node"><svg class="ic32"><use href="#b-units"/></svg><span>Units: mm, g</span></div></li>
        <li class="lv2"><div class="node"><svg class="ic32"><use href="#b-comp"/></svg><span>Hybrid Design</span></div></li>
        <li class="lv1"><button aria-label="Expand"><svg class="chev"><use href="#b-right"/></svg></button><div class="node"><svg class="ic32"><use href="#b-folder"/></svg><span>Named Views</span></div></li>
        <li class="lv1"><button aria-label="Expand"><svg class="chev"><use href="#b-right"/></svg></button><div class="node"><svg class="ic32"><use href="#b-eyeoff"/></svg><svg class="ic32"><use href="#b-folder"/></svg><span>Origin</span></div></li>
        <li class="lv1"><button aria-label="Collapse"><svg class="chev"><use href="#b-down"/></svg></button><div class="node"><svg class="ic32"><use href="#b-eye"/></svg><svg class="ic32"><use href="#b-folder"/></svg><span>Analysis</span></div></li>
        <li class="lv2"><div class="node"><svg class="ic32"><use href="#b-eyeoff"/></svg><svg class="ic32"><use href="#b-section"/></svg><span>Section1</span></div></li>
        <li class="lv2"><div class="node"><svg class="ic32"><use href="#b-eyeoff"/></svg><svg class="ic32"><use href="#b-section"/></svg><span>Section2</span></div></li>
        <li class="lv2"><div class="node"><svg class="ic32"><use href="#b-eye"/></svg><svg class="ic32"><use href="#b-section"/></svg><span>Section3</span></div></li>
        <li class="lv1"><button aria-label="Expand"><svg class="chev"><use href="#b-right"/></svg></button><div class="node"><svg class="ic32"><use href="#b-eyeoff"/></svg><svg class="ic32"><use href="#b-folder"/></svg><span>Relationships</span></div></li>
        <li class="lv1"><button aria-label="Expand"><svg class="chev"><use href="#b-right"/></svg></button><div class="node"><svg class="ic32"><use href="#b-eyeoff"/></svg><svg class="ic32"><use href="#b-folder"/></svg><span>Fasteners</span></div></li>
        <li class="lv1"><button aria-label="Expand"><svg class="chev"><use href="#b-right"/></svg></button><div class="node"><svg class="ic32"><use href="#b-eyeoff"/></svg><svg class="ic32"><use href="#b-folder"/></svg><span>Sketches</span></div></li>
        <li class="lv1"><button aria-label="Expand"><svg class="chev"><use href="#b-right"/></svg></button><div class="node tag violet"><svg class="ic32"><use href="#b-eyeoff"/></svg><svg class="ic32"><use href="#b-anchorcomp"/></svg><svg class="ic32 link"><use href="#chain"/></svg><span>compactShaft_2026 v1:1</span></div></li>
        <li class="lv1"><button aria-label="Expand"><svg class="chev"><use href="#b-right"/></svg></button><div class="node tag pink"><svg class="ic32"><use href="#b-eye"/></svg><svg class="ic32"><use href="#b-body"/></svg><span>Body:1</span></div></li>
        <li class="lv1"><button aria-label="Expand"><svg class="chev"><use href="#b-right"/></svg></button><div class="node tag salmon"><svg class="ic32"><use href="#b-eyeoff"/></svg><svg class="ic32"><use href="#b-body"/></svg><span>BodCap:1</span></div></li>
        <li class="lv1"><button aria-label="Expand"><svg class="chev"><use href="#b-right"/></svg></button><div class="node tag yellow"><svg class="ic32"><use href="#b-eyeoff"/></svg><svg class="ic32"><use href="#b-body"/></svg><span>Cap:1</span></div></li>
        <li class="lv1"><button aria-label="Expand"><svg class="chev"><use href="#b-right"/></svg></button><div class="node tag blue"><svg class="ic32"><use href="#b-eyeoff"/></svg><svg class="ic32"><use href="#b-body"/></svg><span>Cap2:1</span></div></li>
      </ul>
    </div>
    <div class="panel-head">
      <span></span>
      <h2>COMMENTS</h2>
      <button aria-label="Add comment"><svg class="sign" viewBox="0 0 18 18"><path d="M1 9h16M9 1v16" stroke="#808080" stroke-width="4"/></svg></button>
    </div>
  </aside>

  <nav class="navbar" aria-label="View controls">
    <button class="menu" aria-label="Orbit"><svg class="ic34"><use href="#n-orbit"/></svg><svg class="caret"><use href="#caret"/></svg></button>
    <button aria-label="Look at"><svg class="ic34"><use href="#n-look"/></svg></button>
    <button aria-label="Pan"><svg class="ic34"><use href="#n-pan"/></svg></button>
    <button aria-label="Zoom"><svg class="ic34"><use href="#n-zoom"/></svg></button>
    <button class="menu" aria-label="Fit"><svg class="ic34"><use href="#n-fit"/></svg><svg class="caret"><use href="#caret"/></svg></button>
    <button class="menu" aria-label="Display settings"><svg class="ic34"><use href="#n-display"/></svg><svg class="caret"><use href="#caret"/></svg></button>
    <button class="menu" aria-label="Grid and snaps"><svg class="ic34"><use href="#n-grid"/></svg><svg class="caret"><use href="#caret"/></svg></button>
    <button class="menu" aria-label="Viewports"><svg class="ic34"><use href="#n-views"/></svg><svg class="caret"><use href="#caret"/></svg></button>
  </nav>
</main>

<footer class="timeline">
  <div class="player">
    <button aria-label="First"><svg><use href="#p-first"/></svg></button>
    <button aria-label="Previous"><svg><use href="#p-prev"/></svg></button>
    <button aria-label="Play"><svg><use href="#p-play"/></svg></button>
    <button aria-label="Next"><svg><use href="#p-next"/></svg></button>
    <button aria-label="Last"><svg><use href="#p-last"/></svg></button>
  </div>
  <div class="history">
    <div class="bars"><span class="bar cyan"></span><span class="swatches"><i class="pink"></i><i class="salmon"></i><i class="yellow"></i></span></div>
    <ol class="steps">
      <li><svg class="ic32"><use href="#s-link"/></svg></li>
      <li><svg class="ic32"><use href="#s-joint"/></svg></li>
      <li><svg class="ic32"><use href="#s-sketch"/></svg></li>
      <li><svg class="ic32"><use href="#s-sketch"/></svg></li>
      <li><svg class="ic32"><use href="#i-extrude"/></svg></li>
      <li><svg class="ic32"><use href="#s-sketch"/></svg></li>
      <li><svg class="ic32"><use href="#i-extrude"/></svg></li>
      <li><svg class="ic32"><use href="#i-extrude"/></svg></li>
      <li><svg class="ic32"><use href="#s-sketch"/></svg></li>
      <li><svg class="ic32"><use href="#i-extrude"/></svg></li>
      <li><svg class="ic32"><use href="#s-shell"/></svg></li>
      <li><svg class="ic32"><use href="#s-move"/></svg></li>
      <li><svg class="ic32"><use href="#i-chamfer"/></svg></li>
      <li><svg class="ic32"><use href="#i-chamfer"/></svg></li>
      <li><svg class="ic32"><use href="#i-extrude"/></svg></li>
      <li><svg class="ic32"><use href="#i-extrude"/></svg></li>
      <li><svg class="ic32"><use href="#i-chamfer"/></svg></li>
      <li><svg class="ic32"><use href="#i-fillet"/></svg></li>
      <li><svg class="ic32"><use href="#i-split"/></svg></li>
      <li><svg class="ic32"><use href="#i-extrude"/></svg></li>
      <li><svg class="ic32"><use href="#i-extrude"/></svg></li>
      <li><svg class="ic32"><use href="#s-combine"/></svg></li>
      <li><svg class="ic32"><use href="#s-combine"/></svg></li>
      <li><svg class="ic32"><use href="#i-fillet"/></svg></li>
      <li><svg class="ic32"><use href="#i-chamfer"/></svg></li>
      <li><svg class="ic32"><use href="#i-split"/></svg></li>
      <li><svg class="ic32"><use href="#s-combine"/></svg></li>
      <li><svg class="ic32"><use href="#i-fillet"/></svg></li>
      <li><svg class="ic32"><use href="#i-chamfer"/></svg></li>
      <li><svg class="ic32"><use href="#i-split"/></svg></li>
      <li><svg class="ic32"><use href="#i-extrude"/></svg></li>
      <li><svg class="ic32"><use href="#s-sketch"/></svg></li>
      <li><svg class="ic32"><use href="#i-extrude"/></svg></li>
      <li><svg class="ic32"><use href="#i-fillet"/></svg></li>
      <li><svg class="ic32"><use href="#i-extrude"/></svg></li>
      <li><svg class="ic32"><use href="#s-sketch"/></svg></li>
      <li><svg class="ic32"><use href="#i-extrude"/></svg></li>
      <li><svg class="ic32"><use href="#i-fillet"/></svg></li>
      <li><svg class="ic32"><use href="#i-hole"/></svg></li>
      <li><svg class="ic32"><use href="#s-path"/></svg></li>
      <li><svg class="ic32"><use href="#i-hole"/></svg></li>
      <li><svg class="ic32"><use href="#s-path"/></svg></li>
      <li><svg class="ic32"><use href="#i-hole"/></svg></li>
      <li><svg class="ic32"><use href="#s-path"/></svg></li>
      <li><svg class="ic32"><use href="#s-fastener"/></svg><button class="expand" aria-label="Expand group"></button></li>
      <li><svg class="ic32"><use href="#s-fastener"/></svg><button class="expand" aria-label="Expand group"></button></li>
      <li><svg class="ic32"><use href="#s-fastener"/></svg><button class="expand" aria-label="Expand group"></button></li>
      <li><svg class="ic32"><use href="#s-fastener"/></svg></li>
      <li><svg class="ic32"><use href="#s-pattern"/></svg><button class="expand" aria-label="Expand group"></button></li>
      <li><svg class="ic32"><use href="#s-sketch"/></svg></li>
      <li><svg class="ic32"><use href="#s-combine"/></svg></li>
    </ol>
    <svg class="marker" viewBox="0 0 24 64"><path d="M0 0h24v9l-8 8h-2v47h-3V17H9L0 9z" fill="#3c3c3c"/></svg>
  </div>
  <button class="settings" aria-label="Timeline settings"><svg class="ic32"><use href="#b-gear"/></svg></button>
</footer>
</div>
</body>
</html>
```

FILE: styles.css
```css
* {
  box-sizing: border-box;
}

body {
  margin: 0;
  background: #fff;
  color: #3c3c3c;
  font-family: "Noto Sans", "Open Sans", sans-serif;
  font-size: 24px;
  line-height: 32px;
}

button {
  display: flex;
  align-items: center;
  margin: 0;
  padding: 0;
  border: 0;
  background: none;
  color: inherit;
  font: inherit;
}

svg {
  display: block;
  flex: none;
  overflow: visible;
}

symbol {
  overflow: visible;
}

h2 {
  margin: 0;
  font-size: 24px;
  font-weight: 400;
}

ul,
ol {
  margin: 0;
  padding: 0;
  list-style: none;
}

.sprite {
  position: absolute;
  width: 0;
  height: 0;
}

.caret { width: 12px; height: 10px; color: #808080; }
.ic28 { width: 28px; height: 28px; }
.ic32 { width: 32px; height: 32px; }
.ic34 { width: 34px; height: 34px; }
.ic64 { width: 64px; height: 64px; }
.ink { color: #333; }

.cyan { --tag: #00dcff; }
.violet { --tag: #e98ce6; }
.pink { --tag: #ff8ccb; }
.salmon { --tag: #f49c8c; }
.yellow { --tag: #e8cf4c; }
.blue { --tag: #4a9de0; }

.app {
  display: flex;
  flex-direction: column;
  min-height: 100vh;
}

.menubar-gap {
  height: 66px;
  background: #000;
}

/* Title bar */
.titlebar {
  display: flex;
  height: 64px;
  background: #d9d9d9;
  color: #808080;
}

.quick {
  display: grid;
  grid-template-columns: 64px 84px 64px 74px 92px 46px;
  align-items: center;
  padding: 0 16px;
}

.quick button {
  gap: 12px;
}

.quick .home {
  padding-top: 12px;
}

.quick .faded {
  opacity: 0.6;
}

.doc-tab {
  display: flex;
  flex: 1;
  align-items: center;
  margin-top: 8px;
  padding: 2px 12px 0 0;
  border-radius: 8px 8px 0 0;
  background: #f5f5f5;
}

.doc-name {
  display: flex;
  flex: 1;
  align-items: center;
  justify-content: center;
  gap: 10px;
  color: #3c3c3c;
}

.cube { width: 28px; height: 32px; }
.close { width: 18px; height: 18px; }

.new-tab {
  justify-content: center;
  width: 76px;
  margin: 8px 0 0 16px;
  background: #e7e7e7;
}

.account {
  display: flex;
  align-items: center;
  gap: 38px;
  padding: 0 22px 0 32px;
}

.profile { padding-left: 4px; }
.avatar { width: 48px; height: 48px; }

/* Toolbar */
.toolbar {
  display: flex;
  height: 170px;
  padding-left: 23px;
  background: #f5f5f5;
}

.workspace {
  justify-content: center;
  gap: 12px;
  width: 220px;
  height: 122px;
  margin: 20px 9px 0 0;
  padding-bottom: 2px;
  border: 2px solid #b8b8b8;
  border-radius: 8px;
  font-weight: 700;
}

.tabs {
  display: flex;
  gap: 45px;
  padding: 5px 0 0 25px;
}

.tabs button {
  height: 46px;
  padding: 0 24px 8px;
  border-bottom: 6px solid transparent;
}

.tabs .current {
  border-color: #3c3c3c;
}

.groups {
  display: flex;
  padding-top: 3px;
}

.group {
  display: flex;
  flex-direction: column;
  align-items: center;
  gap: 8px;
  padding: 0 20px 0 22px;
  border-right: 2px solid #c8c8c8;
}

.group:last-child {
  border-right: 0;
}

.tools {
  display: flex;
  gap: 22px;
}

.tools .active {
  margin: -7px;
  padding: 5px;
  border: 2px solid #8fc8dc;
  background: #d8ecf5;
}

.label {
  gap: 5px;
  padding: 0 9px 0 1px;
}

/* Canvas */
.canvas {
  position: relative;
  display: flex;
  flex: 1;
  padding: 8px;
}

.model {
  position: absolute;
  left: 1190px;
  top: 656px;
  width: 1052px;
  height: 490px;
}

.viewcube {
  position: absolute;
  right: 44px;
  top: 40px;
  width: 160px;
  height: 170px;
  font-size: 28px;
  text-anchor: middle;
}

.cube-face {
  fill: #92969b;
  font-size: 24px;
  font-weight: 700;
}

.axis { font-weight: 500; }
.axis-x { fill: #ff6b6b; }
.axis-y { fill: #59dd68; }
.axis-z { fill: #8a7ff0; }

.side {
  display: flex;
  flex-direction: column;
  justify-content: space-between;
  width: 599px;
}

.panel-head {
  display: grid;
  grid-template-columns: 44px 1fr auto;
  align-items: center;
  height: 49px;
  padding: 0 23px 0 11px;
  border: 1px solid #e0e0e0;
  border-bottom-width: 2px;
  background: #f5f5f5;
}

.rewind { width: 18px; height: 14px; }
.sign { width: 18px; height: 18px; }

.tree {
  display: grid;
  gap: 8px;
  padding-top: 11px;
}

.tree li {
  display: flex;
  align-items: center;
}

.lv0 { padding-left: 36px; }
.lv1 { padding-left: 72px; }
.lv2 { padding-left: 144px; }

.lv0 > button,
.lv1 > button {
  padding-right: 20px;
}

.chev { width: 16px; height: 16px; }

.node {
  display: flex;
  align-items: center;
  gap: 18px;
  height: 40px;
  padding: 0 18px 0 6px;
  background: #f5f5f5;
}

.node span {
  padding-left: 10px;
}

.tag {
  border-left: 10px solid var(--tag);
}

.lv0 .node {
  gap: 10px;
}

.picked {
  display: flex;
  align-items: center;
  gap: 18px;
  height: 40px;
  padding: 0 10px 0 6px;
  background: #d9d9d9;
  font-weight: 700;
}

.link { color: #707070; }

.navbar {
  position: absolute;
  bottom: 12px;
  left: 50%;
  display: flex;
  align-items: center;
  gap: 18px;
  height: 48px;
  padding: 0 10px 0 5px;
  transform: translateX(-50%);
  background: #f5f5f5;
}

.navbar .menu {
  gap: 7px;
  margin-right: -6px;
}

/* Timeline */
.timeline {
  display: flex;
  height: 100px;
  padding: 0 24px 0 22px;
  background: #f5f5f5;
}

.player {
  display: flex;
  gap: 24px;
  width: 262px;
  padding-top: 12px;
}

.player svg {
  width: 26px;
  height: 30px;
}

.history {
  position: relative;
  padding-top: 20px;
}

.bars,
.steps {
  display: grid;
  grid-template-columns: repeat(51, 48px);
}

.bar {
  grid-column: 1 / 51;
  height: 12px;
  margin: 0 4px;
  background: var(--tag);
}

.swatches {
  display: flex;
  padding-left: 4px;
}

.swatches i {
  width: 12px;
  height: 12px;
  background: var(--tag);
}

.steps li {
  position: relative;
  height: 56px;
  padding: 4px 8px 0;
  background:
    linear-gradient(#c6c6c6, #c6c6c6) center bottom / 3px 14px no-repeat,
    linear-gradient(#c6c6c6, #c6c6c6) right bottom / 100% 4px no-repeat;
}

.steps li:first-child {
  background-size: 3px 14px, 50% 4px;
}

.steps li:last-child {
  background-position: center bottom, left bottom;
  background-size: 3px 14px, 50% 4px;
}

.expand {
  position: absolute;
  bottom: -7px;
  left: 12px;
  width: 20px;
  height: 20px;
  background:
    linear-gradient(#fff, #fff) center / 12px 4px no-repeat,
    linear-gradient(#fff, #fff) center / 4px 12px no-repeat,
    #808080;
}

.marker {
  position: absolute;
  top: 24px;
  right: -12px;
  width: 24px;
  height: 64px;
}

.settings {
  margin-left: auto;
  padding-top: 12px;
}
```
